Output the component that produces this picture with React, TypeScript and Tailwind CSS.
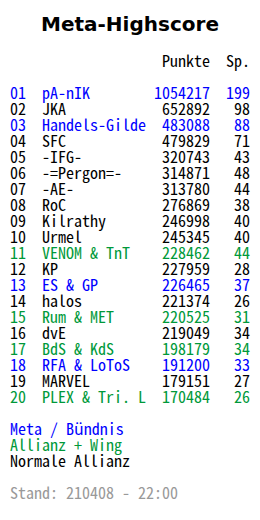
import React from "react";

type Row = [string, string, string, string, "b" | "k" | "g"];

const rows: Row[] = [
  ["01", "pA-nIK", "1054217", "199", "b"],
  ["02", "JKA", "652892", "98", "k"],
  ["03", "Handels-Gilde", "483088", "88", "b"],
  ["04", "SFC", "479829", "71", "k"],
  ["05", "-IFG-", "320743", "43", "k"],
  ["06", "-=Pergon=-", "314871", "48", "k"],
  ["07", "-AE-", "313780", "44", "k"],
  ["08", "RoC", "276869", "38", "k"],
  ["09", "Kilrathy", "246998", "40", "k"],
  ["10", "Urmel", "245345", "40", "k"],
  ["11", "VENOM & TnT", "228462", "44", "g"],
  ["12", "KP", "227959", "28", "k"],
  ["13", "ES & GP", "226465", "37", "b"],
  ["14", "halos", "221374", "26", "k"],
  ["15", "Rum & MET", "220525", "31", "g"],
  ["16", "dvE", "219049", "34", "k"],
  ["17", "BdS & KdS", "198179", "34", "g"],
  ["18", "RFA & LoToS", "191200", "33", "b"],
  ["19", "MARVEL", "179151", "27", "k"],
  ["20", "PLEX & Tri. L", "170484", "26", "g"],
];

const colorClass = {
  b: "text-[#0000ff]",
  k: "text-black",
  g: "text-[#00993a]",
};

export default function App() {
  return (
    <div className="w-[260px] h-[520px] bg-white overflow-hidden">
      <h1
        className="text-center text-[20px] font-bold leading-[24px] pt-[12px] text-black"
        style={{ fontFamily: "'DejaVu Sans', Verdana, sans-serif" }}
      >
        Meta-Highscore
      </h1>
      <div
        className="px-[10px] pt-[16px] text-[16px] leading-[16px] whitespace-pre"
        style={{ fontFamily: "'Noto Sans Mono CJK JP', 'MS Gothic', 'Liberation Mono', monospace" }}
      >
        <div className="grid grid-cols-[32px_112px_56px_40px] text-black">
          <span></span>
          <span></span>
          <span className="text-right">Punkte</span>
          <span className="text-right">Sp.</span>
        </div>
        <div className="h-[16px]"></div>
        {rows.map((r) => (
          <div key={r[0]} className={"grid grid-cols-[32px_112px_56px_40px] " + colorClass[r[4]]}>
            <span>{r[0]}</span>
            <span>{r[1]}</span>
            <span className="text-right">{r[2]}</span>
            <span className="text-right">{r[3]}</span>
          </div>
        ))}
        <div className="h-[16px]"></div>
        <div className="text-[#0000ff]">Meta / Bündnis</div>
        <div className="text-[#00993a]">Allianz + Wing</div>
        <div className="text-black">Normale Allianz</div>
        <div className="h-[16px]"></div>
        <div className="text-[#999999]">Stand: 210408 - 22:00</div>
      </div>
    </div>
  );
}
